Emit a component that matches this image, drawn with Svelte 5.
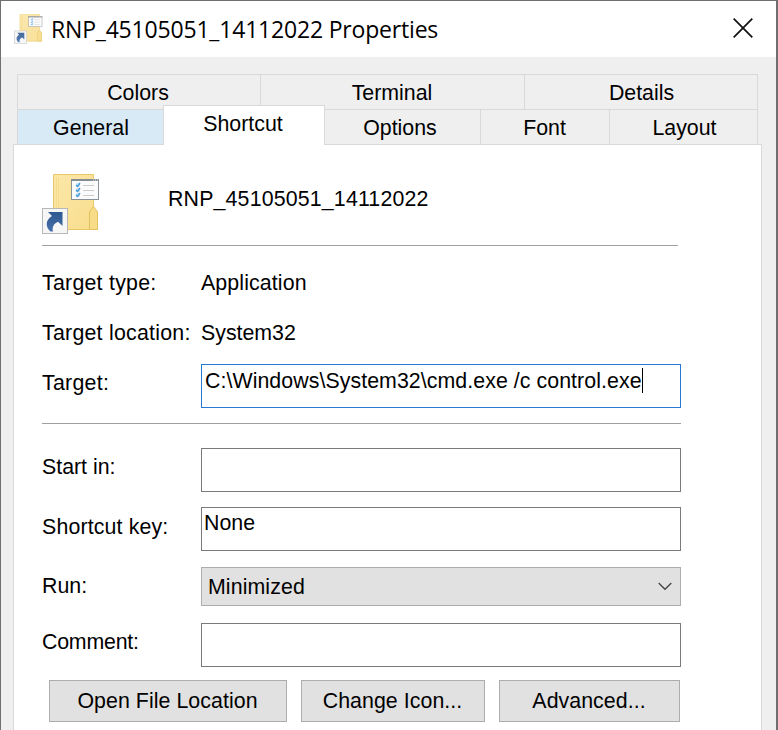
<script>
  const backTabs = [
    { label: 'Colors', width: 243, nudge: -2 },
    { label: 'Terminal', width: 264, nudge: -1 },
    { label: 'Details', width: 234, nudge: 1 }
  ];
  const frontTabs = [
    { label: 'General', width: 146, kind: 'hot', nudge: 1 },
    { label: 'Shortcut', width: 162, kind: 'active', nudge: -2 },
    { label: 'Options', width: 155, nudge: -5 },
    { label: 'Font', width: 129, nudge: -1 },
    { label: 'Layout', width: 149, nudge: 2 }
  ];
  const buttons = [
    { label: 'Open File Location', width: 238 },
    { label: 'Change Icon...', width: 184 },
    { label: 'Advanced...', width: 181 }
  ];
</script>

{#snippet folder(width, height)}
  <svg {width} {height} viewBox="0 0 58 61" aria-hidden="true">
    <defs>
      <linearGradient id="paper" x1="0" y1="0" x2="1" y2="1">
        <stop offset="0" stop-color="#fbe7a9" /><stop offset="1" stop-color="#f9dd8b" />
      </linearGradient>
      <linearGradient id="arrow" x1="0" y1="0" x2="0" y2="1">
        <stop offset="0" stop-color="#2f5790" /><stop offset="1" stop-color="#4670ab" />
      </linearGradient>
    </defs>
    <path d="M11.5 .5H51.500V34L55.500 39V55.500H11.500Z" fill="url(#paper)" stroke="#e8c866" />
    <path d="M14.500 3V54M16.500 3V54" stroke="#f6dc8e" fill="none" />
    <path d="M47.500 55.500V38L51.500 32.500L55.500 38V55.500Z" fill="#f9dc88" stroke="#e3c15e" />
    <rect x="29.500" y="5.500" width="27" height="20" fill="#fbfbfb" stroke="#8b9297" />
    <path d="M29 6H57" stroke="#858c91" stroke-width="2" />
    <path d="M51 6H52M53 6H54M55 6H56" stroke="#eee" />
    <path d="M41 11.500H52M41 16.500H52M41 21.500H52" stroke="#cbcbcb" />
    <path d="M34 9h4v4h-4zM34 14h4v4h-4zM34 19h4v4h-4z" fill="#cfe4f5" />
    <path d="M34 11L35.500 12.500L38 9M34 16L35.500 17.500L38 14M34 21L35.500 22.500L38 19" stroke="#469bd8" stroke-width="1.400" fill="none" />
    <rect x=".5" y="34.500" width="25" height="25" fill="#f6f6f6" stroke="#b7b7b7" />
    <path d="M6 38H20.500V52L16 47.700C12.500 49.300 9.800 52 11 57.500H8.500C6.300 55.500 4.700 53 4.700 50C4.700 46.500 7 44 10 42Z" fill="url(#arrow)" />
  </svg>
{/snippet}

<main class="window">
  <header class="titlebar">
    <span class="small-icon">{@render folder(29, 30)}</span>
    <h1>RNP_45105051_14112022 Properties</h1>
    <button class="close" aria-label="Close">
      <svg width="20" height="20" viewBox="0 0 20 20"><path d="M.7 .7L19.300 19.300M19.300 .7L.7 19.300" stroke="#111" stroke-width="1.700" /></svg>
    </button>
  </header>

  <div class="body">
    <nav class="tabs back">
      {#each backTabs as tab}
        <div class="tab" style:width="{tab.width}px" style:text-indent="{tab.nudge}px">{tab.label}</div>
      {/each}
    </nav>
    <nav class="tabs front">
      {#each frontTabs as tab}
        <div class="tab {tab.kind ?? ''}" style:width="{tab.width}px" style:text-indent="{tab.nudge}px">{tab.label}</div>
      {/each}
    </nav>

    <section class="panel">
      <div class="identity">
        {@render folder(58, 61)}
        <span class="name">RNP_45105051_14112022</span>
      </div>
      <hr class="first" />
      <div class="row info type"><span class="label">Target type:</span><span class="app">Application</span></div>
      <div class="row info"><span class="label">Target location:</span><span>System32</span></div>
      <div class="row target">
        <span class="label">Target:</span>
        <div class="field focus"><span class="command">C:\Windows\System32\cmd.exe /c control.exe</span><i class="caret"></i></div>
      </div>
      <hr class="second" />
      <div class="row start"><span class="label">Start in:</span><div class="field"></div></div>
      <div class="row key"><span class="label">Shortcut key:</span><div class="field">None</div></div>
      <div class="row run">
        <span class="label">Run:</span>
        <div class="select">
          <span>Minimized</span>
          <svg width="14" height="9" viewBox="0 0 14 9"><path d="M.7 1L7 7.300L13.300 1" fill="none" stroke="#444" stroke-width="1.300" /></svg>
        </div>
      </div>
      <div class="row comment"><span class="label">Comment:</span><div class="field"></div></div>
      <div class="actions">
        {#each buttons as button}
          <button style:width="{button.width}px">{button.label}</button>
        {/each}
      </div>
    </section>
  </div>
</main>

<style>
  :global(body) { margin: 0; overflow: hidden; }
  .window, .window * { box-sizing: border-box; }
  .window {
    width: 778px;
    height: 730px;
    overflow: hidden;
    border: solid #706e6f;
    border-width: 1px 2px 0 1px;
    background: #efefef;
    color: #000;
    font: 21.33px/24px "Liberation Sans", Arial, sans-serif;
    white-space: nowrap;
  }
  svg { display: block; flex: none; }
  .titlebar {
    display: flex;
    align-items: center;
    height: 56px;
    padding: 0 23px 2px 13px;
    background: #fff;
  }
  .small-icon { opacity: .9; margin: 2px 8px 0 0; }
  h1 {
    flex: 1;
    margin: 0;
    padding-top: 2px;
    font: 400 23px/30px "Open Sans", "Noto Sans", sans-serif;
    letter-spacing: -.19px;
  }
  .close { padding: 0; border: 0; background: none; }
  .body { padding: 17px 0 0 12px; }
  .tabs { display: flex; margin-left: 4px; width: 741px; }
  .tab {
    flex: none;
    height: 35px;
    padding-top: 6px;
    border: solid #d9d9d9;
    border-width: 1px 0 0 1px;
    text-align: center;
  }
  .tab:last-child { border-right-width: 1px; }
  .tab.hot { background: #d9eaf7; }
  .tab.active {
    position: relative;
    height: 40px;
    margin-top: -4px;
    border-right-width: 1px;
    background: #fff;
  }
  .tab.active + .tab { border-left: 0; }
  .front { height: 35px; }
  .panel {
    width: 749px;
    height: 600px;
    padding: 29px 0 0 28px;
    border: 1px solid #d9d9d9;
    background: #fff;
  }
  .identity { display: flex; height: 71px; }
  .name { margin: 13px 0 0 68px; letter-spacing: .17px; }
  hr { height: 1px; margin: 0; border: 0; background: #a0a0a0; }
  .first { width: 636px; }
  .second { width: 639px; margin-top: 15px; }
  .row { display: flex; }
  .label { width: 159px; flex: none; }
  .info { height: 50px; }
  .info .label { letter-spacing: .25px; }
  .app { letter-spacing: .12px; }
  .type { margin-top: 25px; }
  .info + .target { margin-top: -7px; }
  .field {
    display: flex;
    width: 480px;
    height: 44px;
    padding: 4px 3px;
    border: 1px solid #7a7a7a;
  }
  .focus { border-color: #2778d0; }
  .command { letter-spacing: .065px; }
  .caret { width: 1px; height: 25px; background: #000; margin-top: -1px; }
  .target .label { padding-top: 7px; letter-spacing: .27px; }
  .start { margin-top: 24px; }
  .start .label { padding-top: 7px; }
  .key { margin-top: 15px; }
  .key .label { padding-top: 8px; letter-spacing: .15px; }
  .key .field { padding: 3px 2px; }
  .run { margin-top: 16px; }
  .run .label { padding-top: 7px; }
  .select {
    display: flex;
    align-items: center;
    justify-content: space-between;
    width: 480px;
    height: 39px;
    padding: 0 8px 0 6px;
    border: 1px solid #adadad;
    background: #e1e1e1;
  }
  .select span { letter-spacing: .1px; }
  .comment { margin-top: 17px; }
  .comment .label { padding-top: 7px; letter-spacing: -.2px; }
  .actions { display: flex; gap: 14px; margin: 13px 0 0 7px; }
  .actions button {
    height: 42px;
    padding: 0 1px 0 0;
    border: 1px solid #adadad;
    background: #e1e1e1;
    color: #000;
    font: inherit;
    letter-spacing: .06px;
  }
</style>
